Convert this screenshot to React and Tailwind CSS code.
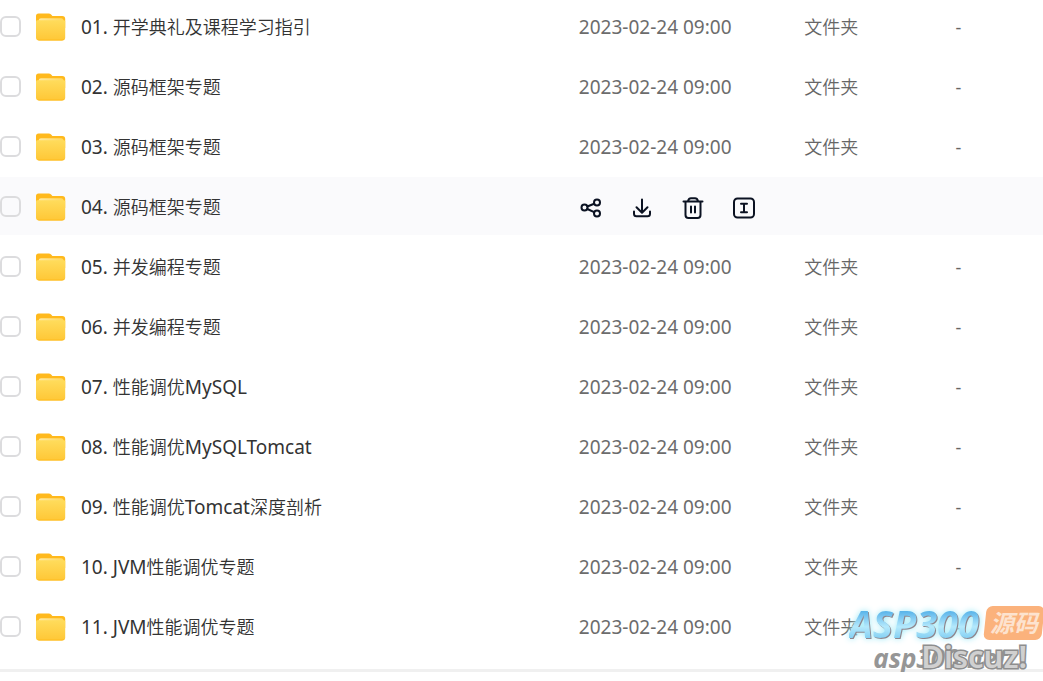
import React from "react";

const files = [
  {name: "01. 开学典礼及课程学习指引"},
  {name: "02. 源码框架专题"},
  {name: "03. 源码框架专题"},
  {name: "04. 源码框架专题", active: true},
  {name: "05. 并发编程专题"},
  {name: "06. 并发编程专题"},
  {name: "07. 性能调优MySQL"},
  {name: "08. 性能调优MySQLTomcat"},
  {name: "09. 性能调优Tomcat深度剖析"},
  {name: "10. JVM性能调优专题"},
  {name: "11. JVM性能调优专题"}
];

const FolderIcon = () => (
  <svg className="w-[30px] h-7 shrink-0" viewBox="0 0 30 28" aria-hidden="true">
    <defs>
      <linearGradient id="folderFront" x1="0" y1="0" x2="0" y2="1">
        <stop offset="0" stopColor="#ffdc5c" />
        <stop offset="1" stopColor="#ffc736" />
      </linearGradient>
      <linearGradient id="folderShine" x1="0" y1="0" x2="1" y2="0">
        <stop offset="0" stopColor="#ffe9a0" />
        <stop offset="0.5" stopColor="#ffe080" />
        <stop offset="1" stopColor="#ffd75c" />
      </linearGradient>
    </defs>
    <path d="M0 3a2.500 2.500 0 0 1 2.500-2.500h10.200c1 0 1.700.3 2.400.9l1.300 1.600h9.800A3 3 0 0 1 29.200 6v9H0z" fill="#ffb91c" />
    <path d="M2.500 8.500q.2-3.300 2.500-3.300h20q2.500 0 2.700 3.300z" fill="url(#folderShine)" />
    <path d="M0 8.500q0-1.300 1.500-1.300h26q1.700 0 1.700 1.300v16a3 3 0 0 1-3 3H3a3 3 0 0 1-3-3z" fill="url(#folderFront)" />
    <path d="M1 26q1 1.500 2.500 1.500h22.500q1.800 0 2.600-1.700-1.200.7-2.600.7H3.500Q2 26.500 1 26z" fill="#ffbb1f" />
  </svg>
);

const icons = {
  分享: (
    <>
      <circle cx="4.500" cy="10.500" r="3" />
      <circle cx="17" cy="5.500" r="3" />
      <circle cx="17" cy="16.500" r="3" />
      <path d="M7.300 9.500 14.200 6.800M7.300 12l6.900 3.200" />
    </>
  ),
  下载: <path d="M11 2.500v13M5.500 10.300l5.500 5.500 5.500-5.500M3 14.500v2.300a2.500 2.500 0 0 0 2.500 2.500h11a2.500 2.500 0 0 0 2.500-2.500v-2.300" />,
  删除: (
    <>
      <path d="M1.500 4.500h19M3.500 4.500V18a3 3 0 0 0 3 3h9a3 3 0 0 0 3-3V4.500M6 4q.8-2.700 3-2.700h4q2.200 0 3 2.700" />
      <path d="M9 9.500v6M13 9.500v6" />
    </>
  ),
  重命名: (
    <>
      <rect x="1" y="1.500" width="20" height="19" rx="3.500" />
      <path d="M8 6.800h6M8 15.200h6M11 6.800v8.400" />
    </>
  )
};

const ActionButton = ({label}) => (
  <button type="button" aria-label={label} className="text-[#0b1222]">
    <svg className="block size-[22px]" viewBox="0 0 22 22" fill="none" stroke="currentColor" strokeWidth="2" strokeLinecap="round" strokeLinejoin="round">
      {icons[label]}
    </svg>
  </button>
);

// latin runs are set one step larger than the chinese ones
const FileName = ({name}) => (
  <span>
    {name.split(/([\x20-\x7e]+)/).filter(Boolean).map((part, index) => (
      <span key={index} className={/^[\x20-\x7e]/.test(part) ? "text-[19px] font-normal" : ""}>{part}</span>
    ))}
  </span>
);

const FileRow = ({file, id}) => (
  <tr className={file.active ? "bg-[#fafafc]" : "bg-white"}>
    <td className="h-[58px] p-0">
      <div className="flex items-center">
        <input id={id} type="checkbox" className="appearance-none size-[21px] shrink-0 rounded-md border-2 border-[#dcdcde]" />
        <label htmlFor={id} className="flex items-center gap-[15px] pl-[15px] pt-[2px] whitespace-nowrap text-[#333]">
          <FolderIcon />
          <FileName name={file.name} />
        </label>
      </div>
    </td>
    {file.active ? (
      <td colSpan={3} className="p-0">
        <div className="flex items-center gap-[29px] pt-[3px] pl-px">
          {Object.keys(icons).map((label) => <ActionButton key={label} label={label} />)}
        </div>
      </td>
    ) : (
      <>
        <td className="p-0 pt-[2px] text-[19px] font-normal text-[#6c6c6c] whitespace-nowrap">2023-02-24 09:00</td>
        <td className="p-0 pt-[2px] whitespace-nowrap">文件夹</td>
        <td className="p-0 pt-[2px] font-normal">-</td>
      </>
    )}
  </tr>
);

const Watermark = () => (
  <div className="absolute right-0 bottom-0 pointer-events-none flex flex-col items-end gap-px font-bold leading-none">
    <div className="flex h-[34px] items-center gap-[6px]">
      <span className="text-[38px] italic text-transparent bg-clip-text bg-linear-to-b from-[#5bb5ea] from-20% via-[#b4e9fc] via-60% to-[#74c8f0] [filter:drop-shadow(1px_1px_0_#8f858c)_drop-shadow(0_0_3px_#9eeaf8)]">ASP300</span>
      <span className="relative flex h-[34px] w-[58px] items-center justify-center text-[24px] italic text-[#fde3cf]">
        <span className="absolute inset-0 -skew-x-6 rounded-md bg-[#fbb27c]" />
        <span className="relative">源码</span>
      </span>
    </div>
    <div className="grid items-baseline pr-4">
      <span className="col-start-1 row-start-1 text-[26px] italic text-[#969696]">asp300.net</span>
      <span className="relative col-start-1 row-start-1 pl-12 text-[31px] font-semibold text-[#d0d0d0] [-webkit-text-stroke:3px_#8e8e8e] [paint-order:stroke_fill]">Discuz!</span>
    </div>
  </div>
);

const App = () => (
  <main className="relative flow-root bg-white text-[18px] leading-6 font-[350] text-[#666] font-['Noto_Sans','Noto_Sans_CJK_SC',sans-serif]">
    <table className="-mt-[5px] w-full table-fixed border-separate border-spacing-x-0 border-spacing-y-[2px]">
      <colgroup>
        <col className="w-[55.5%]" />
        <col className="w-[21.6%]" />
        <col className="w-[14.5%]" />
        <col />
      </colgroup>
      <tbody>
        {files.map((file, index) => <FileRow key={index} file={file} id={`file-${index}`} />)}
      </tbody>
    </table>
    <div className="mt-3 h-[3px] bg-[#f0f0f0]" />
    <Watermark />
  </main>
);

export default App;
